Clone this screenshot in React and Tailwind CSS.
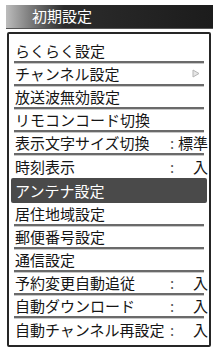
const rows = [
  { label: 'らくらく設定' },
  { label: 'チャンネル設定', arrow: true },
  { label: '放送波無効設定' },
  { label: 'リモコンコード切換' },
  { label: '表示文字サイズ切換', value: '標準', wide: true },
  { label: '時刻表示', value: '入' },
  { label: 'アンテナ設定', active: true },
  { label: '居住地域設定' },
  { label: '郵便番号設定' },
  { label: '通信設定' },
  { label: '予約変更自動追従', value: '入' },
  { label: '自動ダウンロード', value: '入' },
  { label: '自動チャンネル再設定', value: '入', last: true },
]

function Row({ row, next }) {
  if (row.active) {
    return (
      <div className="h-[25px] -mx-[3px] flex items-center px-[4px] bg-[#4a4a4a] rounded-[2px] text-white">
        {row.label}
      </div>
    )
  }
  const sep = !row.last && !next?.active
  return (
    <div
      className={`flex items-center h-[23px] ${sep ? 'border-b-2 border-[#6a6a6a] shadow-[0_1px_0_#c8c8c8]' : ''}`}
    >
      <span className="flex-1 pl-[1px] whitespace-nowrap">{row.label}</span>
      {row.arrow && (
        <svg width="8" height="9" viewBox="0 0 8 9" className="mr-[4px]">
          <polygon points="1,1 7,4.5 1,8" fill="#e6e6e6" stroke="#b5b5b5" strokeWidth="1" />
        </svg>
      )}
      {row.value && (
        <span className={`flex items-center -mr-[4px] ${row.wide ? 'w-[38px]' : 'w-[38px]'}`}>
          <span className={`${row.wide ? 'w-[11px]' : 'w-[23px]'} text-[#555]`}>:</span>
          <span className="flex-1 text-right whitespace-nowrap">{row.value}</span>
        </span>
      )}
    </div>
  )
}

export default function App() {
  return (
    <div
      className="w-[215px] h-[351px] bg-white pt-[5px] overflow-hidden text-[#151515]"
      style={{ fontFamily: '"Noto Sans CJK JP", "Noto Sans", sans-serif' }}
    >
      <div className="ml-[6px] mr-[2px] h-[24px] flex items-center pl-[26px] text-white text-[15px] bg-gradient-to-r from-[#bdbdbd] via-[#2c2c2c] via-[28%] to-[#1c1c1c] border-b border-[#555]">
        初期設定
      </div>
      <div className="mt-[3px] ml-[7px] mr-[4px] h-[315px] border-2 border-[#262626] rounded-[2px] px-[5px] pt-[6px] text-[15px] leading-none">
        {rows.map((r, i) => (
          <Row key={r.label} row={r} next={rows[i + 1]} />
        ))}
      </div>
    </div>
  )
}
